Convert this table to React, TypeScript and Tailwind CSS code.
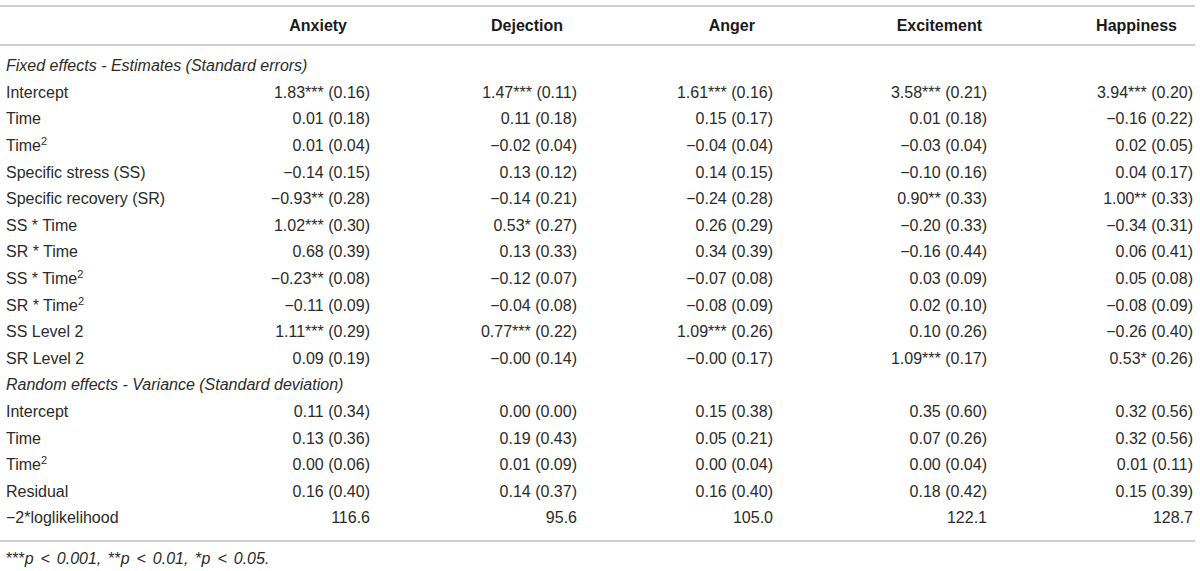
import React from 'react';

type Row = { label: React.ReactNode; values: string[] };

const Sq = () => <span className="inline-block text-[11px] align-top -translate-y-[2px]">2</span>;

const columns = ['Anxiety', 'Dejection', 'Anger', 'Excitement', 'Happiness'];
// header right padding per column, values sit flush right
const headerPad = ['pr-[23px]', 'pr-[14px]', 'pr-[18px]', 'pr-[5px]', 'pr-[16px]'];

const fixed: Row[] = [
    { label: 'Intercept', values: ['1.83*** (0.16)', '1.47*** (0.11)', '1.61*** (0.16)', '3.58*** (0.21)', '3.94*** (0.20)'] },
    { label: 'Time', values: ['0.01 (0.18)', '0.11 (0.18)', '0.15 (0.17)', '0.01 (0.18)', '−0.16 (0.22)'] },
    { label: <>Time<Sq /></>, values: ['0.01 (0.04)', '−0.02 (0.04)', '−0.04 (0.04)', '−0.03 (0.04)', '0.02 (0.05)'] },
    { label: 'Specific stress (SS)', values: ['−0.14 (0.15)', '0.13 (0.12)', '0.14 (0.15)', '−0.10 (0.16)', '0.04 (0.17)'] },
    { label: 'Specific recovery (SR)', values: ['−0.93** (0.28)', '−0.14 (0.21)', '−0.24 (0.28)', '0.90** (0.33)', '1.00** (0.33)'] },
    { label: 'SS * Time', values: ['1.02*** (0.30)', '0.53* (0.27)', '0.26 (0.29)', '−0.20 (0.33)', '−0.34 (0.31)'] },
    { label: 'SR * Time', values: ['0.68 (0.39)', '0.13 (0.33)', '0.34 (0.39)', '−0.16 (0.44)', '0.06 (0.41)'] },
    { label: <>SS * Time<Sq /></>, values: ['−0.23** (0.08)', '−0.12 (0.07)', '−0.07 (0.08)', '0.03 (0.09)', '0.05 (0.08)'] },
    { label: <>SR * Time<Sq /></>, values: ['−0.11 (0.09)', '−0.04 (0.08)', '−0.08 (0.09)', '0.02 (0.10)', '−0.08 (0.09)'] },
    { label: 'SS Level 2', values: ['1.11*** (0.29)', '0.77*** (0.22)', '1.09*** (0.26)', '0.10 (0.26)', '−0.26 (0.40)'] },
    { label: 'SR Level 2', values: ['0.09 (0.19)', '−0.00 (0.14)', '−0.00 (0.17)', '1.09*** (0.17)', '0.53* (0.26)'] },
];

const random: Row[] = [
    { label: 'Intercept', values: ['0.11 (0.34)', '0.00 (0.00)', '0.15 (0.38)', '0.35 (0.60)', '0.32 (0.56)'] },
    { label: 'Time', values: ['0.13 (0.36)', '0.19 (0.43)', '0.05 (0.21)', '0.07 (0.26)', '0.32 (0.56)'] },
    { label: <>Time<Sq /></>, values: ['0.00 (0.06)', '0.01 (0.09)', '0.00 (0.04)', '0.00 (0.04)', '0.01 (0.11)'] },
    { label: 'Residual', values: ['0.16 (0.40)', '0.14 (0.37)', '0.16 (0.40)', '0.18 (0.42)', '0.15 (0.39)'] },
    { label: '−2*loglikelihood', values: ['116.6', '95.6', '105.0', '122.1', '128.7'] },
];

const grid = 'grid grid-cols-[157px_207px_207px_196px_214px_206px]';

const DataRow = ({ row }: { row: Row }) => (
    <div className={`${grid} h-[26.6px] items-center`}>
        <div className="whitespace-nowrap">{row.label}</div>
        {row.values.map((v, i) => (
            <div key={i} className="text-right whitespace-nowrap">{v}</div>
        ))}
    </div>
);

const SectionRow = ({ title }: { title: string }) => (
    <div className="h-[26.6px] flex items-center italic whitespace-nowrap">{title}</div>
);

export default function App() {
    return (
        <div
            className="w-[1200px] h-[571px] bg-white text-[#2b2b2b] text-[16px] leading-none"
            style={{ fontFamily: '"Liberation Sans", Arial, sans-serif' }}
        >
            <div className="pt-[5px] pr-[5px]">
                <div className="h-[2px] bg-[#cfcfcf]" />
                {/* Header */}
                <div className={`${grid} pl-[6px] h-[37px] items-center font-bold text-[#1a1a1a]`}>
                    <div />
                    {columns.map((c, i) => (
                        <div key={c} className={`text-right ${headerPad[i]}`}>{c}</div>
                    ))}
                </div>
                <div className="h-[2px] bg-[#cfcfcf]" />

                <div className="pl-[6px] pt-[7px]">
                    <SectionRow title="Fixed effects - Estimates (Standard errors)" />
                    {fixed.map((r, i) => <DataRow key={i} row={r} />)}
                    <SectionRow title="Random effects - Variance (Standard deviation)" />
                    {random.map((r, i) => <DataRow key={i} row={r} />)}
                </div>

                <div className="h-[2px] bg-[#cfcfcf] mt-[8px]" />
                <div className="pl-[6px] pt-[9px] italic whitespace-nowrap [word-spacing:2.5px]">
                    <span className="not-italic">***</span>p &lt; 0.001, <span className="not-italic">**</span>p &lt; 0.01, <span className="not-italic">*</span>p &lt; 0.05.
                </div>
            </div>
        </div>
    );
}
